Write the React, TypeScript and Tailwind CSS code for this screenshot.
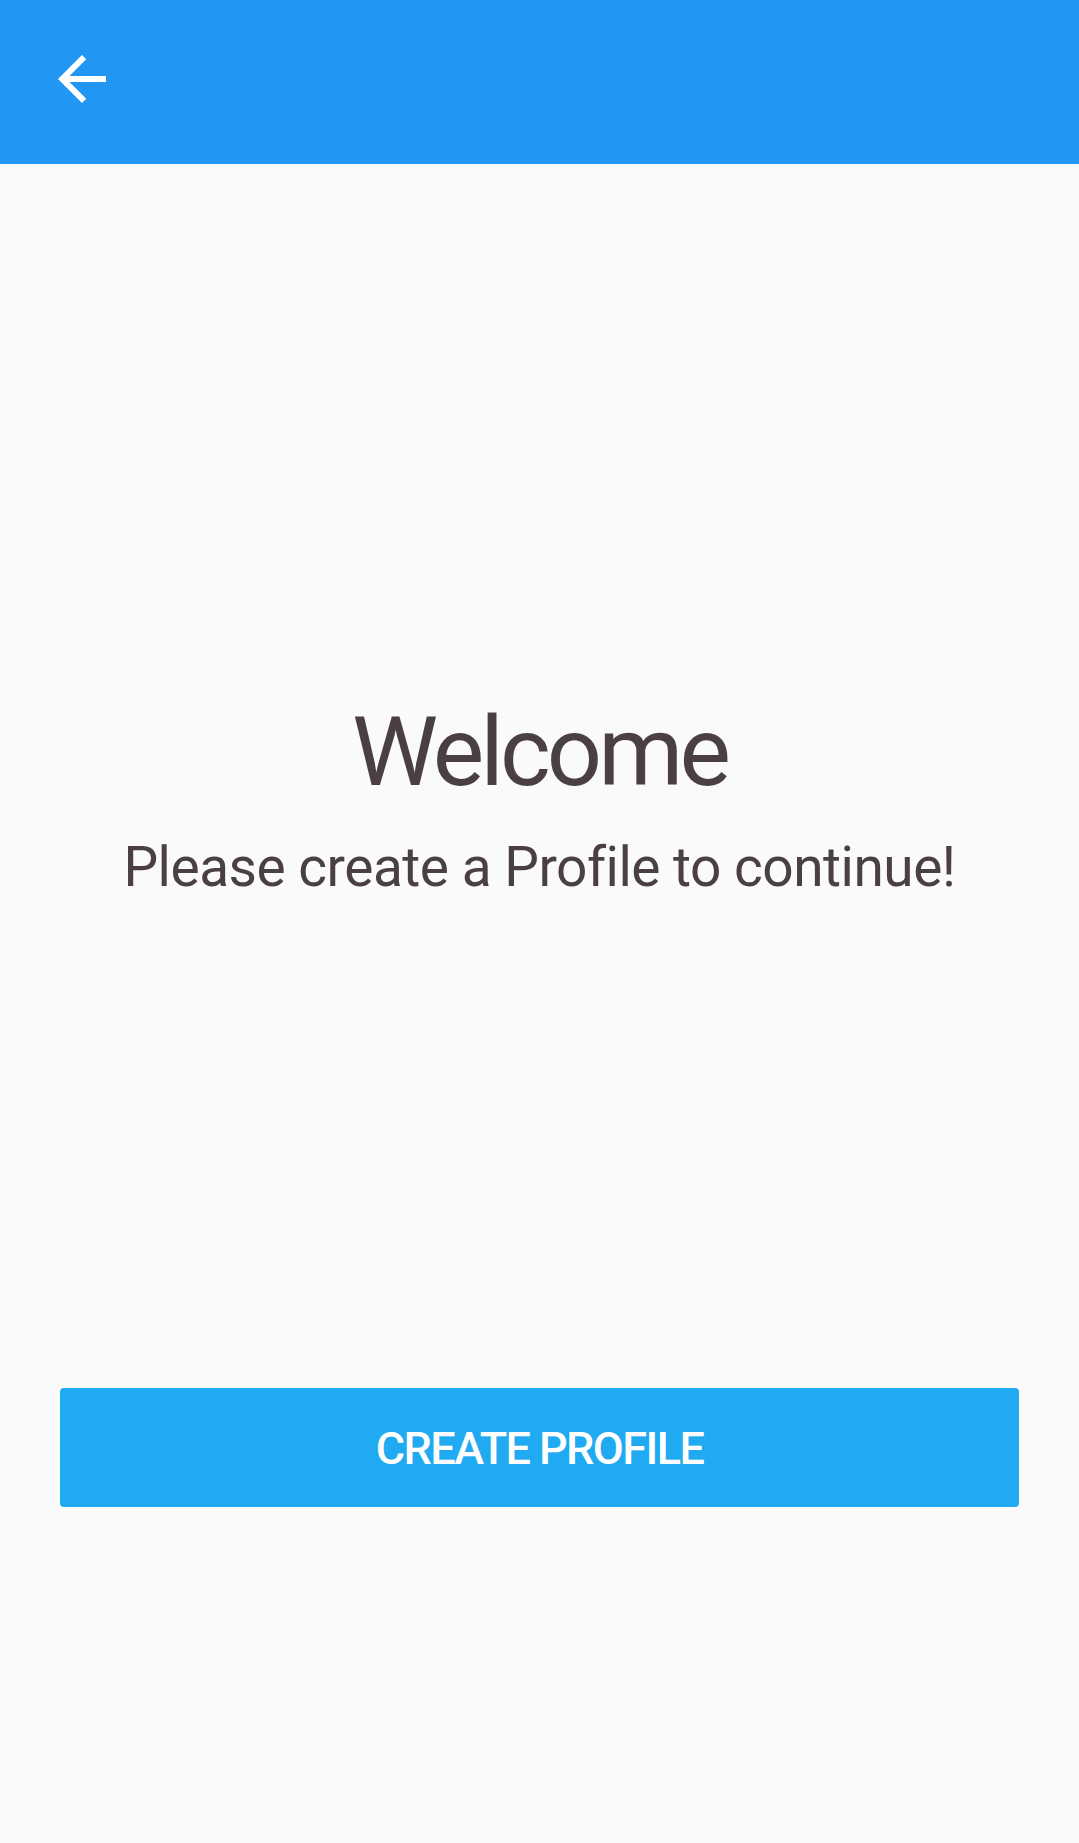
export default function App() {
  return (
    <div className="min-h-[1843px] bg-[#fafafa] font-['Roboto',sans-serif] flex flex-col">
      {/* APP BAR */}
      <header className="h-[164px] bg-[#2196f3] flex items-start pl-[46px] pt-[43px]">
        <button aria-label="Back" className="w-[72px] h-[72px] text-white">
          <svg viewBox="0 0 24 24" width="72" height="72" fill="currentColor">
            <path d="M20 11H7.83l5.59-5.59L12 4l-8 8 8 8 1.41-1.41L7.83 13H20v-2z" />
          </svg>
        </button>
      </header>

      {/* CONTENT */}
      <main className="flex flex-col items-center pt-[540px] px-[60px]">
        <h1 className="text-[97px] leading-none tracking-[-0.04em] text-[#4a3f41] font-normal">
          Welcome
        </h1>
        <p className="mt-[39px] text-[55px] leading-none tracking-[-0.009em] text-[#4a3f41]">
          Please create a Profile to continue!
        </p>

        <button className="mt-[493px] w-full h-[119px] pt-[3px] rounded-[4px] bg-[#1faaf1] text-white text-[45px] font-medium tracking-[-0.035em]">
          CREATE PROFILE
        </button>
      </main>
    </div>
  );
}
